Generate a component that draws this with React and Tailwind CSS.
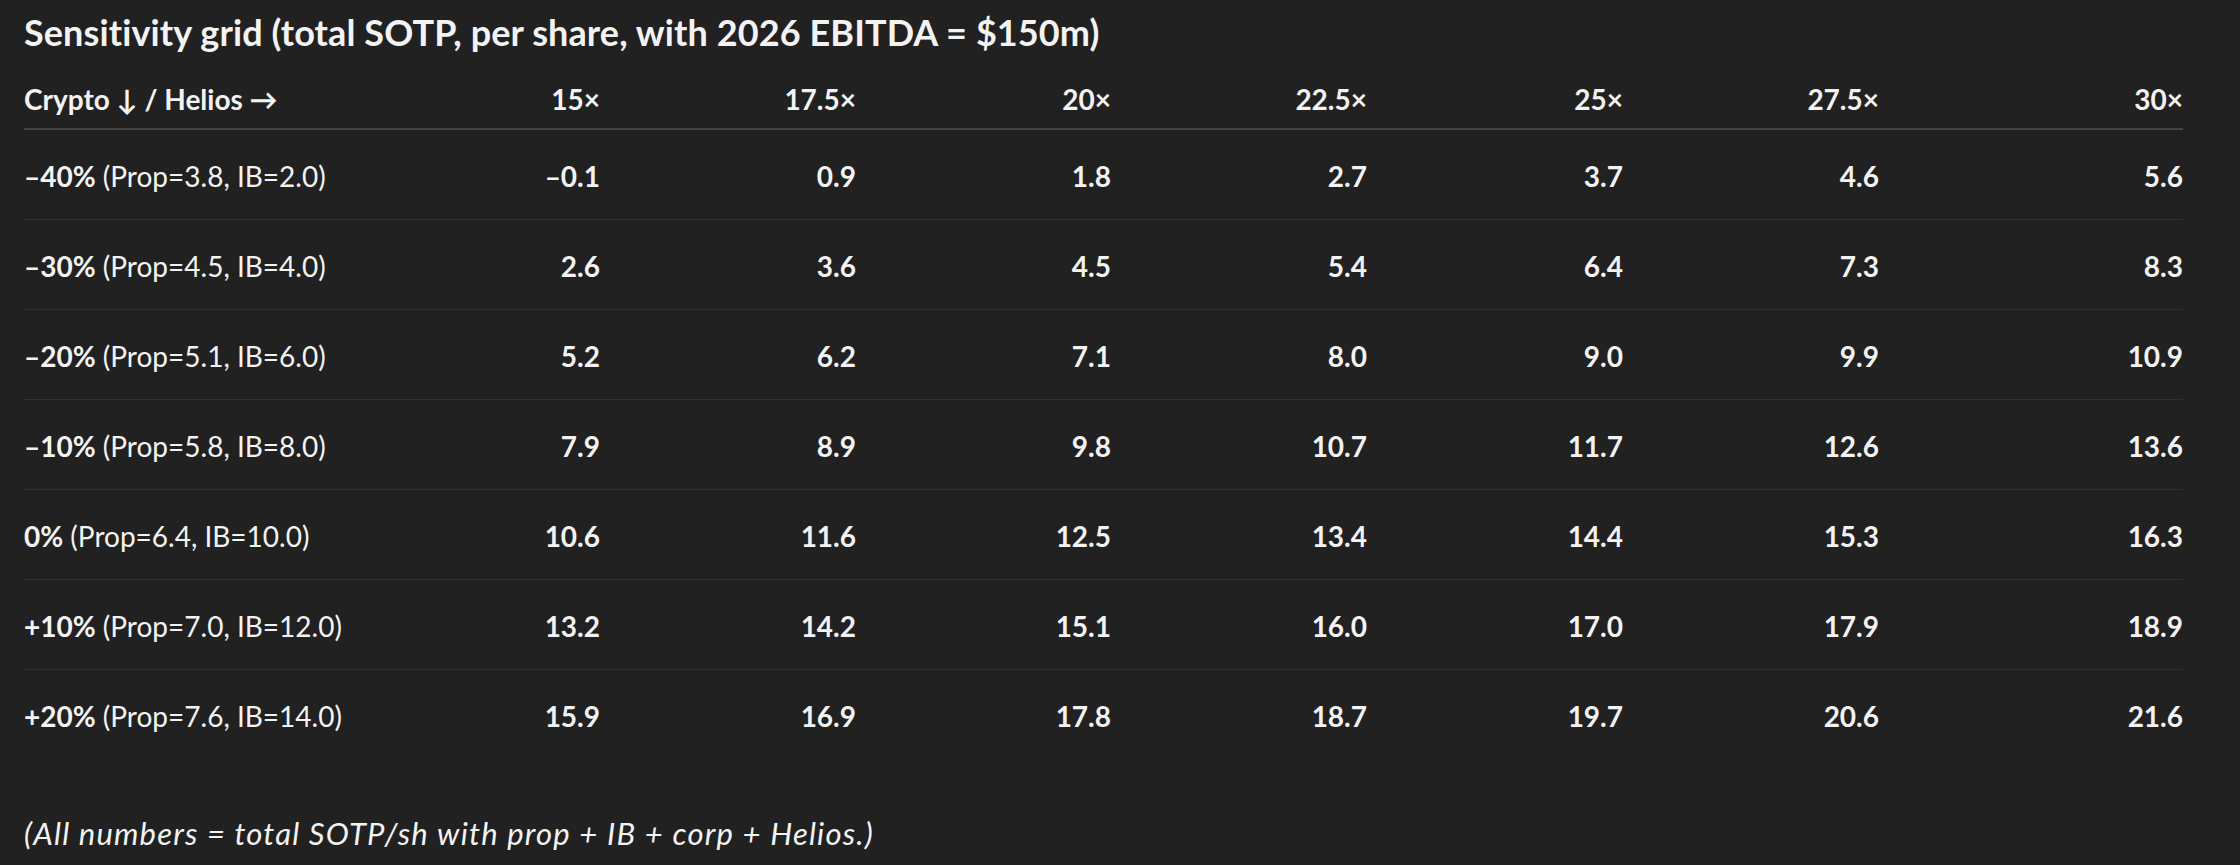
import React from 'react';

// Helios EV/EBITDA multiples across the top, crypto scenarios down the side
const multiples = ['15×', '17.5×', '20×', '22.5×', '25×', '27.5×', '30×'];

const rows = [
  { move: '–40%', note: '(Prop=3.8, IB=2.0)', values: ['–0.1', '0.9', '1.8', '2.7', '3.7', '4.6', '5.6'] },
  { move: '–30%', note: '(Prop=4.5, IB=4.0)', values: ['2.6', '3.6', '4.5', '5.4', '6.4', '7.3', '8.3'] },
  { move: '–20%', note: '(Prop=5.1, IB=6.0)', values: ['5.2', '6.2', '7.1', '8.0', '9.0', '9.9', '10.9'] },
  { move: '–10%', note: '(Prop=5.8, IB=8.0)', values: ['7.9', '8.9', '9.8', '10.7', '11.7', '12.6', '13.6'] },
  { move: '0%', note: '(Prop=6.4, IB=10.0)', values: ['10.6', '11.6', '12.5', '13.4', '14.4', '15.3', '16.3'] },
  { move: '+10%', note: '(Prop=7.0, IB=12.0)', values: ['13.2', '14.2', '15.1', '16.0', '17.0', '17.9', '18.9'] },
  { move: '+20%', note: '(Prop=7.6, IB=14.0)', values: ['15.9', '16.9', '17.8', '18.7', '19.7', '20.6', '21.6'] }
];

const gridCols = 'grid grid-cols-[320px_256px_256px_255px_256px_256px_256px_304px]';

const SensitivityTable = () => {
  return (
    <div className="w-[2159px]">
      <div className={`${gridCols} h-[64px] items-center border-b-2 border-[#444444] font-bold`}>
        <div className="pt-[4px]">Crypto ↓ / Helios →</div>
        {multiples.map((m) => (
          <div key={m} className="text-right pt-[4px]">{m}</div>
        ))}
      </div>

      {rows.map((row, i) => (
        <div
          key={row.move}
          className={`${gridCols} h-[90px] items-center ${i < rows.length - 1 ? 'border-b border-[#313131]' : ''}`}
        >
          <div className="pt-[2px]">
            <span className="font-bold">{row.move}</span> {row.note}
          </div>
          {row.values.map((v, j) => (
            <div key={j} className="text-right font-bold pt-[2px]">{v}</div>
          ))}
        </div>
      ))}
    </div>
  );
};

export default function App() {
  return (
    <div className="min-h-screen bg-[#212121] text-[#f3f3f3] font-['Lato',sans-serif] text-[28px] leading-[40px] pl-[24px] overflow-hidden">
      <h3 className="pt-[10px] text-[36px] leading-[44px] font-bold tracking-[0.1px] h-[66px]">
        Sensitivity grid (total SOTP, per share, with 2026 EBITDA = $150m)
      </h3>
      <SensitivityTable />
      <p className="mt-[53px] italic text-[31px] leading-[40px] tracking-[1.2px]">
        (All numbers = total SOTP/sh with prop + IB + corp + Helios.)
      </p>
    </div>
  );
}
